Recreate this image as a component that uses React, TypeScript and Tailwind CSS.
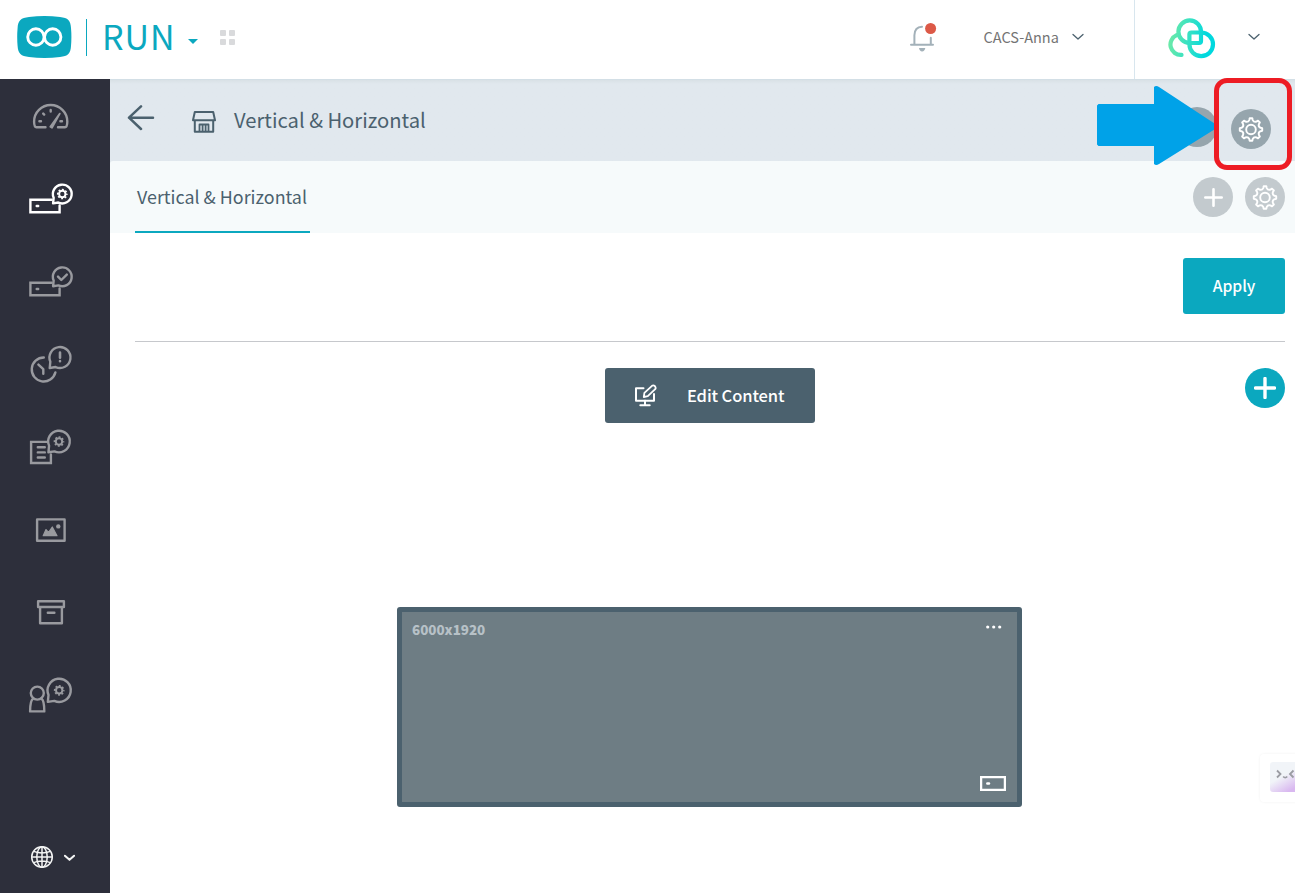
import type { ReactNode } from "react"

const navIcons = [GaugeIcon, PlayerSettingsIcon, PlayerCheckIcon, ScheduleAlertIcon, DocumentSettingsIcon, MediaIcon, ArchiveIcon, UserSettingsIcon]

// outline of a cog with rounded valleys between its teeth
function cogPath(cx: number, cy: number, outer: number, inner: number, teeth = 8) {
    const step = (Math.PI * 2) / teeth
    const point = (angle: number, radius: number) =>
        `${(cx + radius * Math.cos(angle)).toFixed(2)} ${(cy + radius * Math.sin(angle)).toFixed(2)}`
    let d = ""
    for (let i = 0; i < teeth; i++) {
        const a = i * step - Math.PI / 2
        d += `${i === 0 ? "M" : "L"}${point(a - step * 0.15, outer)} L${point(a + step * 0.15, outer)} L${point(a + step * 0.23, inner + 0.4)} `
        d += `Q${point(a + step * 0.5, inner - 1.6)} ${point(a + step * 0.77, inner + 0.4)} `
    }
    return d + "Z"
}

function Cog() {
    return (
        <svg className="size-[26px]" viewBox="0 0 26 26" fill="none" stroke="currentColor" strokeWidth="1.9" strokeLinejoin="round">
            <path d={cogPath(13, 13.5, 11.3, 9.2)} />
            <circle cx="13" cy="13.5" r="4.8" />
        </svg>
    )
}

function Plus({ className }: { className: string }) {
    return (
        <svg className={className} viewBox="0 0 22 22" fill="none" stroke="currentColor" strokeLinecap="round">
            <path d="M11 1.5V20.5M1.5 11H20.5" />
        </svg>
    )
}

function NavSvg({ children }: { children: ReactNode }) {
    return (
        <svg className="w-14 h-12" viewBox="0 0 56 48" fill="none" stroke="currentColor" strokeWidth="2.4" strokeLinecap="round" strokeLinejoin="round">
            {children}
        </svg>
    )
}

function Bubble({ cx, cy, r }: { cx: number, cy: number, r: number }) {
    return (
        <path d={`M${cx - r * 0.92} ${cy + r * 0.4} L${cx - r * 0.98} ${cy + r} L${cx - r * 0.42} ${cy + r * 0.91} A${r} ${r} 0 1 0 ${cx - r * 0.92} ${cy + r * 0.4}Z`} />
    )
}

function SmallCog({ cx, cy }: { cx: number, cy: number }) {
    return (
        <>
            <circle cx={cx} cy={cy} r="3.2" strokeWidth="2" />
            <circle cx={cx} cy={cy} r="4.5" strokeWidth="1.7" strokeLinecap="butt" strokeDasharray="1.9 1.634" strokeDashoffset="0.95" />
        </>
    )
}

function GaugeIcon() {
    return (
        <NavSvg>
            <path d="M18.5 34.2H9.4Q7.1 34.2 7.1 28.6A16.6 16.6 0 0 1 40.3 28.6Q40.3 34.2 38 34.2H31" />
            <path d="M23.7 17V18.6M16.2 20.6L17.2 21.6M12.4 28.2H14M33.4 28.2H35" />
            <path d="M32.8 20.6L23.3 33.8L25 34.8Z" strokeWidth="1.8" fill="currentColor" />
        </NavSvg>
    )
}

function PlayerSettingsIcon() {
    return (
        <NavSvg>
            <path d="M24.6 23.8H3.4V36.2H32.6V29.5M9.7 30H11.2" strokeLinejoin="miter" />
            <Bubble cx={35.3} cy={18} r={9.4} />
            <SmallCog cx={35.3} cy={18} />
        </NavSvg>
    )
}

function PlayerCheckIcon() {
    return (
        <NavSvg>
            <path d="M24.6 24.8H3.4V37.2H32.6V30.5M9.7 31H11.2" strokeLinejoin="miter" />
            <Bubble cx={35.3} cy={18.8} r={9.4} />
            <path d="M31 18.6L34.3 22L39.8 16.6" />
        </NavSvg>
    )
}

function ScheduleAlertIcon() {
    return (
        <NavSvg>
            <path d="M16.8 16.5A12 12 0 1 0 28.4 31.4M11.4 23.6L16.3 28.2V32.8" />
            <Bubble cx={33} cy={16.5} r={10.5} />
            <path d="M33 11.6V16.7M33 20.1V20.3" strokeWidth="2.6" />
        </NavSvg>
    )
}

function DocumentSettingsIcon() {
    return (
        <NavSvg>
            <path d="M19.6 18.9H4.1V40H23.9V31.4M10.8 24.3H17.8M10.8 29.4H17.8M10.8 34.500H17.8" strokeLinejoin="miter" />
            <Bubble cx={32} cy={18.5} r={10.8} />
            <SmallCog cx={32} cy={18.5} />
        </NavSvg>
    )
}

function MediaIcon() {
    return (
        <NavSvg>
            <rect x="10.1" y="13.4" width="27.5" height="21.3" />
            <path d="M16.2 29.7L19 23.6L21.6 26.4L25.3 21L30 29.7Z" fill="currentColor" strokeWidth="1.2" />
            <circle cx="31.3" cy="20.4" r="2.2" fill="currentColor" stroke="none" />
        </NavSvg>
    )
}

function ArchiveIcon() {
    return (
        <NavSvg>
            <path d="M11.1 12.2H36.9V18H11.1ZM13.1 18V34.2H34.9V18M20.8 23.8H27.4" />
        </NavSvg>
    )
}

function UserSettingsIcon() {
    return (
        <NavSvg>
            <circle cx="10.3" cy="22.1" r="6.5" />
            <path d="M6 27.8Q3.1 29.8 3.1 40.400H17.3Q17.3 29.8 14.6 27.8" />
            <Bubble cx={32.2} cy={19.3} r={11.6} />
            <SmallCog cx={32.2} cy={19.3} />
        </NavSvg>
    )
}

function Chevron({ className }: { className: string }) {
    return (
        <svg className={className} viewBox="0 0 12 8" fill="none" stroke="currentColor" strokeLinecap="round" strokeLinejoin="round">
            <path d="M1 1.5L6 6L11 1.5" />
        </svg>
    )
}

function Header() {
    return (
        <header className="flex h-20 shrink-0 border-b border-[#d3dfe6] bg-white">
            <div className="flex grow items-start">
                <svg className="ml-[17px] mt-4 w-[55px] h-[42px] text-[#0ba8bf]" viewBox="0 0 55 42">
                    <path d="M12 1Q27.5 -1 43 1C51 1.8 53.6 4.5 54 12Q54.8 21 54 30C53.6 37.5 51 40.2 43 41Q27.5 43 12 41C4 40.2 1 37.5 .6 30Q-.2 21 .6 12C1 4.5 4 1.8 12 1Z" fill="currentColor" />
                    <g fill="none" stroke="#fff" strokeWidth="2.9">
                        <circle cx="18.9" cy="21" r="8.2" />
                        <circle cx="35.7" cy="21" r="8.2" />
                    </g>
                </svg>
                <div className="ml-[14px] mt-[19px] h-[37px] w-px bg-[#0ba8bf]" />
                <span className="ml-[15px] mt-3 w-[75px] text-[34px] leading-[48px] tracking-[1px] text-[#0ba8bf]">RUN</span>
                <svg className="ml-[11px] mt-[39px] w-[10px] h-[5px]" viewBox="0 0 10 5">
                    <path d="M0 0H10L5 5Z" fill="#0ba8bf" />
                </svg>
                <div className="ml-[22px] mt-[30px] grid grid-cols-2 gap-[3px] [&>i]:size-[6px] [&>i]:rounded-[1px] [&>i]:bg-[#d9dadc]">
                    <i /><i /><i /><i />
                </div>
            </div>
            <div className="flex w-[224px] items-center">
                <svg className="-mt-1.5 w-7 h-8" viewBox="0 0 28 32" fill="none" stroke="#a3b1b9" strokeWidth="2" strokeLinecap="round">
                    <path d="M1 23.800H23M4.400 23.300V14.300Q4.600 5.900 12 5.700M20.800 16.800V23.300" />
                    <path d="M9 27H15.300Q14.600 30.400 12.100 30.400Q9.600 30.400 9 27Z" fill="#a3b1b9" stroke="none" />
                    <circle cx="20.6" cy="7.5" r="7" fill="#fff" stroke="none" />
                    <circle cx="20.6" cy="7.5" r="5.5" fill="#dc5947" stroke="none" />
                </svg>
                <span className="ml-[45.5px] -mt-1.5 text-[14.5px] text-[#747474] whitespace-nowrap">CACS-Anna</span>
                <Chevron className="ml-[13.5px] -mt-1.5 w-3 h-2 shrink-0 stroke-[1.3] text-[#4b616e]" />
            </div>
            <div className="flex w-[161px] items-center border-l border-[#d8e6ee]">
                <svg className="ml-[33px] -mt-[3px] w-12 h-[42px]" viewBox="0 0 48 42" fill="none" strokeWidth="4.2" strokeLinecap="round" strokeLinejoin="round">
                    <defs>
                        <linearGradient id="brand" gradientUnits="userSpaceOnUse" x1="0" y1="20" x2="47" y2="26">
                            <stop offset="0" stopColor="#6feaa6" />
                            <stop offset=".55" stopColor="#27dfcc" />
                            <stop offset=".8" stopColor="#00d8de" />
                        </linearGradient>
                    </defs>
                    <g stroke="url(#brand)">
                        <path d="M8.600 18.200A10.300 10.300 0 0 0 13.500 37.900" />
                        <path d="M33 14.700A11.300 11.300 0 1 0 21.500 26H31Q33 26 33 24Z" />
                        <path d="M21.400 27.300A11.800 11.800 0 1 0 33.200 15.500H23.400Q21.400 15.500 21.400 17.500Z" />
                    </g>
                </svg>
                <Chevron className="ml-8 -mt-1.5 w-3 h-2 stroke-[1.3] text-[#4b616e]" />
            </div>
        </header>
    )
}

function Sidebar() {
    return (
        <aside className="flex w-[110px] shrink-0 flex-col justify-between bg-[#2d2f3b]">
            <nav className="flex flex-col items-center gap-[34.6px] pt-[14px]">
                {navIcons.map((Icon, index) => (
                    <a key={index} className={index === 1 ? "text-white" : "text-[#999a9f]"}><Icon /></a>
                ))}
            </nav>
            <div className="mb-6 ml-[29.5px] flex items-center text-[#f3f4f4]">
                <svg className="size-6" viewBox="0 0 24 24" fill="none" stroke="currentColor" strokeWidth="1.5">
                    <circle cx="12" cy="12" r="10.3" />
                    <ellipse cx="12" cy="12" rx="5.2" ry="10.3" />
                    <path d="M12 1.7V22.3M1.7 12H22.3M3.6 6.4Q12 9.4 20.4 6.4M3.6 17.6Q12 14.6 20.4 17.6" />
                </svg>
                <Chevron className="ml-[10.5px] mt-0.5 w-[11px] h-2 stroke-[2.2]" />
            </div>
        </aside>
    )
}

function TitleBar() {
    return (
        <div className="flex h-[81px] shrink-0 items-start bg-gradient-to-b from-[#d9e1e6] from-0% to-[#e1e8ee] to-5% text-[#4b616e]">
            <svg className="ml-[17px] mt-[25px] w-7 h-[26px]" viewBox="0 0 28 26" fill="none" stroke="currentColor" strokeWidth="2.5" strokeLinecap="round" strokeLinejoin="round">
                <path d="M26 12.7H2M14 1.4L2 12.7L14 24" />
            </svg>
            <svg className="ml-[37px] mt-[31px] w-6 h-[22px]" viewBox="0 0 24 22" fill="none" stroke="currentColor" strokeWidth="2" strokeLinejoin="round">
                <path d="M2.8 1H21.2L23 9.2H1ZM2.8 9.4V20.8H21.2V9.4" />
                <path d="M7.5 20.5V13.5H16.5V20.5M10.6 14V20.5M13.6 14V20.5" strokeWidth="1.8" />
            </svg>
            <h1 className="ml-[18px] mt-[25px] text-[20.2px] leading-[30px]">Vertical &amp; Horizontal</h1>
            <div className="ml-auto mr-6 mt-[27px] flex gap-[14px] text-white">
                <button className="size-10 rounded-full bg-[#96a5ad]" />
                <button className="mt-[2px] flex size-10 items-center justify-center rounded-full bg-[#96a5ad]"><Cog /></button>
            </div>
        </div>
    )
}

function TabBar() {
    return (
        <div className="flex h-[72px] shrink-0 items-center justify-between rounded-tl-[3px] bg-[#f6fafb] pl-[25px] pr-[10px]">
            <div className="h-full w-[175px] border-b-2 border-[#0ba8bf] pl-[2px] pt-[21px] text-[17.9px] leading-[28px] text-[#4b616e] whitespace-nowrap">Vertical &amp; Horizontal</div>
            <div className="flex gap-3 text-white [&>button]:flex [&>button]:size-10 [&>button]:items-center [&>button]:justify-center [&>button]:rounded-full [&>button]:bg-[#c3cace]">
                <button><Plus className="size-[19px] stroke-[3]" /></button>
                <button><Cog /></button>
            </div>
        </div>
    )
}

function Content() {
    return (
        <main className="pl-[25px] pr-[10px] pt-[25px]">
            <div className="flex h-[84px] justify-end border-b border-[#c6c8cc]">
                <button className="h-14 w-[102px] rounded-[3px] bg-[#0ba8bf] text-[15.7px] font-medium text-white">Apply</button>
            </div>
            <div className="grid grid-cols-[1fr_auto_1fr] pt-[26px]">
                <button className="col-start-2 flex h-[55px] w-[210px] items-center rounded-[3px] bg-[#4b616e] pl-[29px] text-[16.5px] font-medium tracking-[-0.1px] text-white">
                    <svg className="w-6 h-[23px]" viewBox="0 0 24 23" fill="none" stroke="currentColor" strokeWidth="2" strokeLinejoin="round">
                        <path d="M9.5 4.200H2V16.700H20V10M11 16.500V21M6.3 21.300H15.7" strokeLinecap="round" />
                        <path d="M9.8 13L10.4 8.8L18 1.8Q19.4 .8 21 2.2Q22.2 3.8 21.2 5.2L13.8 12.2Z" strokeWidth="1.8" />
                    </svg>
                    <span className="ml-[29px]">Edit Content</span>
                </button>
                <button className="flex size-10 items-center justify-center justify-self-end rounded-full bg-[#0ba8bf] text-white">
                    <Plus className="size-[22px] stroke-[3.4]" />
                </button>
            </div>
            <div className="ml-[262px] mt-[184px] flex h-[200px] w-[625px] flex-col justify-between rounded-[3px] border-5 border-[#4b616e] bg-[#6e7d84]">
                <div className="flex justify-between pl-[10px] pr-[15.5px] pt-[7px]">
                    <span className="text-[13.4px] leading-5 font-black text-[#b7c1c7]">6000x1920</span>
                    <svg className="mt-[6px] w-4 h-1" viewBox="0 0 16 4" fill="#fff">
                        <circle cx="1.7" cy="2" r="1.6" />
                        <circle cx="7.7" cy="2" r="1.6" />
                        <circle cx="13.7" cy="2" r="1.6" />
                    </svg>
                </div>
                <svg className="mb-[11px] mr-[11px] w-[26px] h-[15px] self-end" viewBox="0 0 26 15" fill="none" stroke="#fff">
                    <rect x="1.1" y="1.1" width="23.8" height="12.8" strokeWidth="2.3" />
                    <path d="M7.3 7.5H9" strokeWidth="2.4" strokeLinecap="round" />
                </svg>
            </div>
        </main>
    )
}

export default function App() {
    return (
        <div className="relative flex h-[893px] w-[1295px] flex-col overflow-hidden bg-white font-['Noto_Sans_CJK_SC',sans-serif]">
            <Header />
            <div className="-mt-px flex min-h-0 grow">
                <Sidebar />
                <div className="flex grow flex-col bg-white">
                    <div className="flex flex-col bg-[#e1e8ee] border-t border-[#d3dfe6]">
                        <TitleBar />
                        <TabBar />
                    </div>
                    <Content />
                </div>
            </div>

            {/* pointer to the settings button */}
            <svg className="absolute left-[1097px] top-[85px] w-[121px] h-[82px]" viewBox="0 0 121 82">
                <path d="M1.5 19H57V2Q59 0 62 2L119 39.5Q121 41.5 119 43.5L62 79Q59 81 57 79V61H1.5L0 59.500V20.500Z" fill="#00a2e8" />
            </svg>
            <div className="absolute left-[1214px] top-[78px] h-[92px] w-[78px] rounded-[13px] border-5 border-[#ed1c24]" />

            <div className="absolute left-[1260px] top-[754px] h-12 w-10 rounded-[4px] bg-white pl-[10px] pt-2 shadow-[0_0_3px_rgba(0,0,0,0.06)]">
                <div className="h-[30px] w-[30px] rounded-[3px] bg-[linear-gradient(150deg,#f1f4f8_45%,#d9b8f0_85%)]">
                    <svg className="size-[30px]" viewBox="0 0 30 30" fill="none" stroke="#9b9ca3" strokeWidth="1.8">
                        <path d="M7 8.500L10.500 12L7 15.500M23.500 8.500L20 12L23.500 15.500M13.200 14.500Q15.200 16.800 17.200 14.500" />
                    </svg>
                </div>
            </div>
        </div>
    )
}
